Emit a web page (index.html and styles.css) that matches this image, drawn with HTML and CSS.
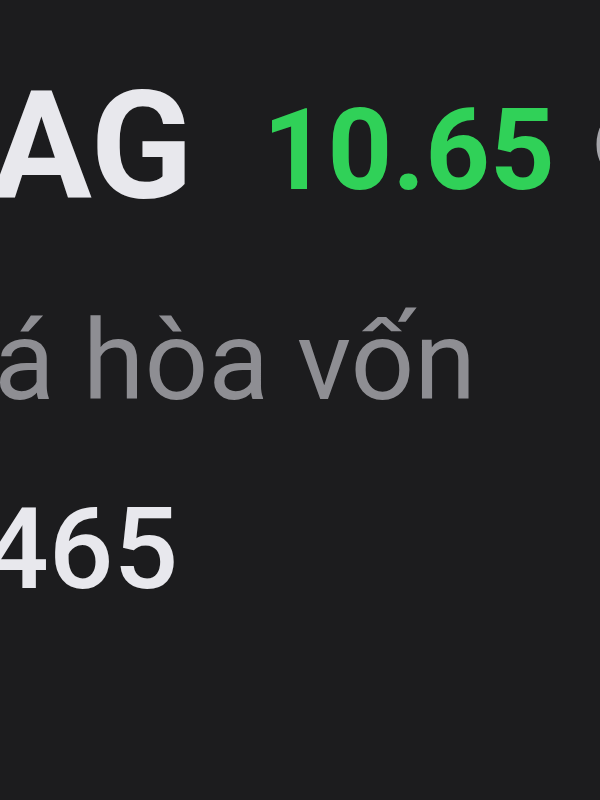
FILE: index.html
```html
<!DOCTYPE html>
<html lang="vi">
<head>
  <meta charset="UTF-8">
  <meta name="viewport" content="width=device-width, initial-scale=1.0">
  <title>Giá hòa vốn</title>
  <link rel="stylesheet" href="styles.css">
</head>
<body>

  <div class="stock">
    <div class="stock-head">
      <span class="ticker">AG</span>
      <span class="price">10.65</span>
      <span class="change">(</span>
    </div>

    <div class="label">á hòa vốn</div>
    <div class="value">465</div>
  </div>

</body>
</html>
```

FILE: styles.css
```css
body {
  font-family: 'Roboto', 'Liberation Sans', sans-serif;
  background: #1c1c1e;
  margin: 0;
  padding: 0;
  width: 600px;
  height: 800px;
  overflow: hidden;
}

.stock {
  padding-top: 72px;
}

.stock-head {
  display: flex;
  align-items: center;
  height: 150px;
  white-space: nowrap;
}

.ticker {
  font-size: 150px;
  font-weight: bold;
  line-height: 1;
  color: #e8e8ed;
  margin-left: -9px;
}

.price {
  font-size: 113px;
  font-weight: bold;
  line-height: 1;
  color: #30d158;
  margin-left: 70px;
  margin-top: 6px;
}

.change {
  font-size: 58px;
  line-height: 1;
  color: #a5a5aa;
  margin-left: 38px;
  margin-bottom: 12px;
}

.label {
  font-size: 112px;
  line-height: 1;
  color: #8e8e93;
  margin-top: 83px;
  margin-left: -6px;
  white-space: nowrap;
}

.value {
  font-size: 114px;
  font-weight: 500;
  line-height: 1;
  color: #e8e8ed;
  margin-top: 75px;
  margin-left: -16px;
}
```
